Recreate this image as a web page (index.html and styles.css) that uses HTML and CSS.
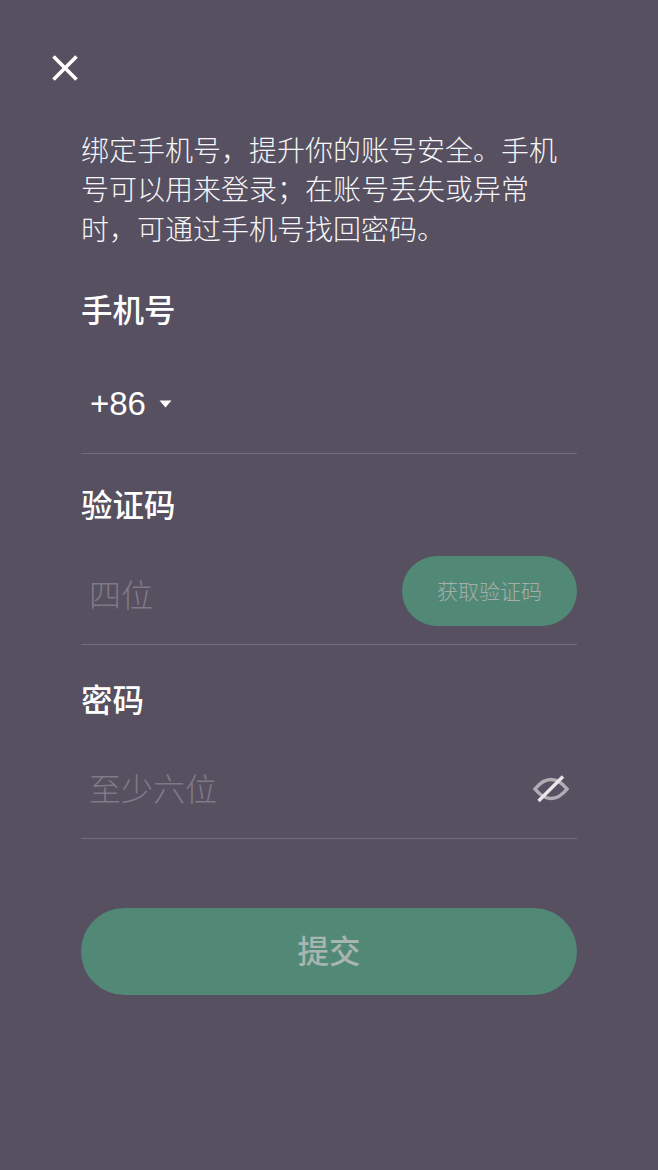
FILE: index.html
```html
<!DOCTYPE html>
<html lang="zh-CN">
<head>
<meta charset="utf-8">
<title>绑定手机号</title>
<link rel="stylesheet" href="styles.css">
</head>
<body>
<div class="page">
  <button class="close" aria-label="关闭">
    <svg width="28" height="28" viewBox="0 0 28 28"><path d="M2.500 2.500 L25.500 25.500 M25.500 2.500 L2.500 25.500" stroke="#fff" stroke-width="3.600" fill="none"/></svg>
  </button>
  <main class="content">
    <p class="intro">绑定手机号，提升你的账号安全。手机号可以用来登录；在账号丢失或异常时，可通过手机号找回密码。</p>

    <h2 class="label">手机号</h2>
    <div class="field field-phone">
      <span class="code">+86</span>
      <svg class="caret" width="13" height="8" viewBox="0 0 13 8"><path d="M0.500 0.500 H12.500 L6.500 7.500 Z" fill="#fff"/></svg>
    </div>

    <h2 class="label label-code">验证码</h2>
    <div class="field field-code">
      <span class="hint">四位</span>
      <button class="send">获取验证码</button>
    </div>

    <h2 class="label label-pass">密码</h2>
    <div class="field field-pass">
      <span class="hint">至少六位</span>
      <svg class="eye" width="36" height="30" viewBox="0 0 36 30" fill="none">
        <path d="M2 15 C8 7.500 13 5.500 18 5.500 C23 5.500 28 7.500 34 15 C28 22.500 23 24.500 18 24.500 C13 24.500 8 22.500 2 15 Z" stroke="#b0adb5" stroke-width="3.600"/>
        <path d="M5.500 27 L30 2.500" stroke="#e8e7ea" stroke-width="3.400"/>
      </svg>
    </div>

    <button class="submit">提交</button>
  </main>
</div>
</body>
</html>
```
FILE: styles.css
```css
* { box-sizing: border-box; }
html, body { margin: 0; padding: 0; }
body {
  background: #565060;
  font-family: "Noto Sans CJK SC", "Liberation Sans", sans-serif;
}
.page {
  width: 658px;
  height: 1170px;
  padding: 54px 0 0 51px;
}
.close {
  display: block;
  width: 28px;
  height: 28px;
  padding: 0;
  border: 0;
  background: none;
}
.close svg { display: block; }
.content {
  width: 496px;
  margin: 48px 0 0 30px;
}
.intro {
  margin: 0;
  font-size: 28px;
  font-weight: 300;
  line-height: 39.250px;
  color: #f7f6f8;
}
.label {
  margin: 37px 0 0;
  font-size: 31.500px;
  font-weight: 500;
  line-height: 46px;
  color: #fff;
}
.label-code { margin-top: 26px; }
.label-pass { margin-top: 30px; }
.field {
  display: flex;
  align-items: center;
  border-bottom: 1px solid #736d7a;
  padding-left: 8px;
}
.field-phone { height: 123px; padding-top: 24px; }
.field-code { height: 119px; padding-top: 13px; }
.field-pass { height: 118px; padding-top: 15px; }
.code {
  margin-left: 1px;
  font-family: "Liberation Sans", sans-serif;
  font-size: 33px;
  color: #fff;
}
.caret { margin-left: 13px; }
.hint {
  font-size: 32px;
  font-weight: 300;
  color: #807a87;
  flex: 1;
}
.field-code .hint { padding-top: 4px; }
.send {
  width: 175px;
  height: 70px;
  padding: 0 0 3px;
  border: 0;
  border-radius: 35px;
  background: #528976;
  color: #a5aea9;
  font-family: inherit;
  font-size: 21px;
  font-weight: 300;
}
.eye { margin: 4px 8px 0 0; }
.submit {
  display: block;
  width: 496px;
  height: 87px;
  margin-top: 69px;
  padding: 0 0 4px;
  border: 0;
  border-radius: 44px;
  background: #528976;
  color: #a9b5af;
  font-family: inherit;
  font-size: 31.500px;
  font-weight: 500;
}
```
